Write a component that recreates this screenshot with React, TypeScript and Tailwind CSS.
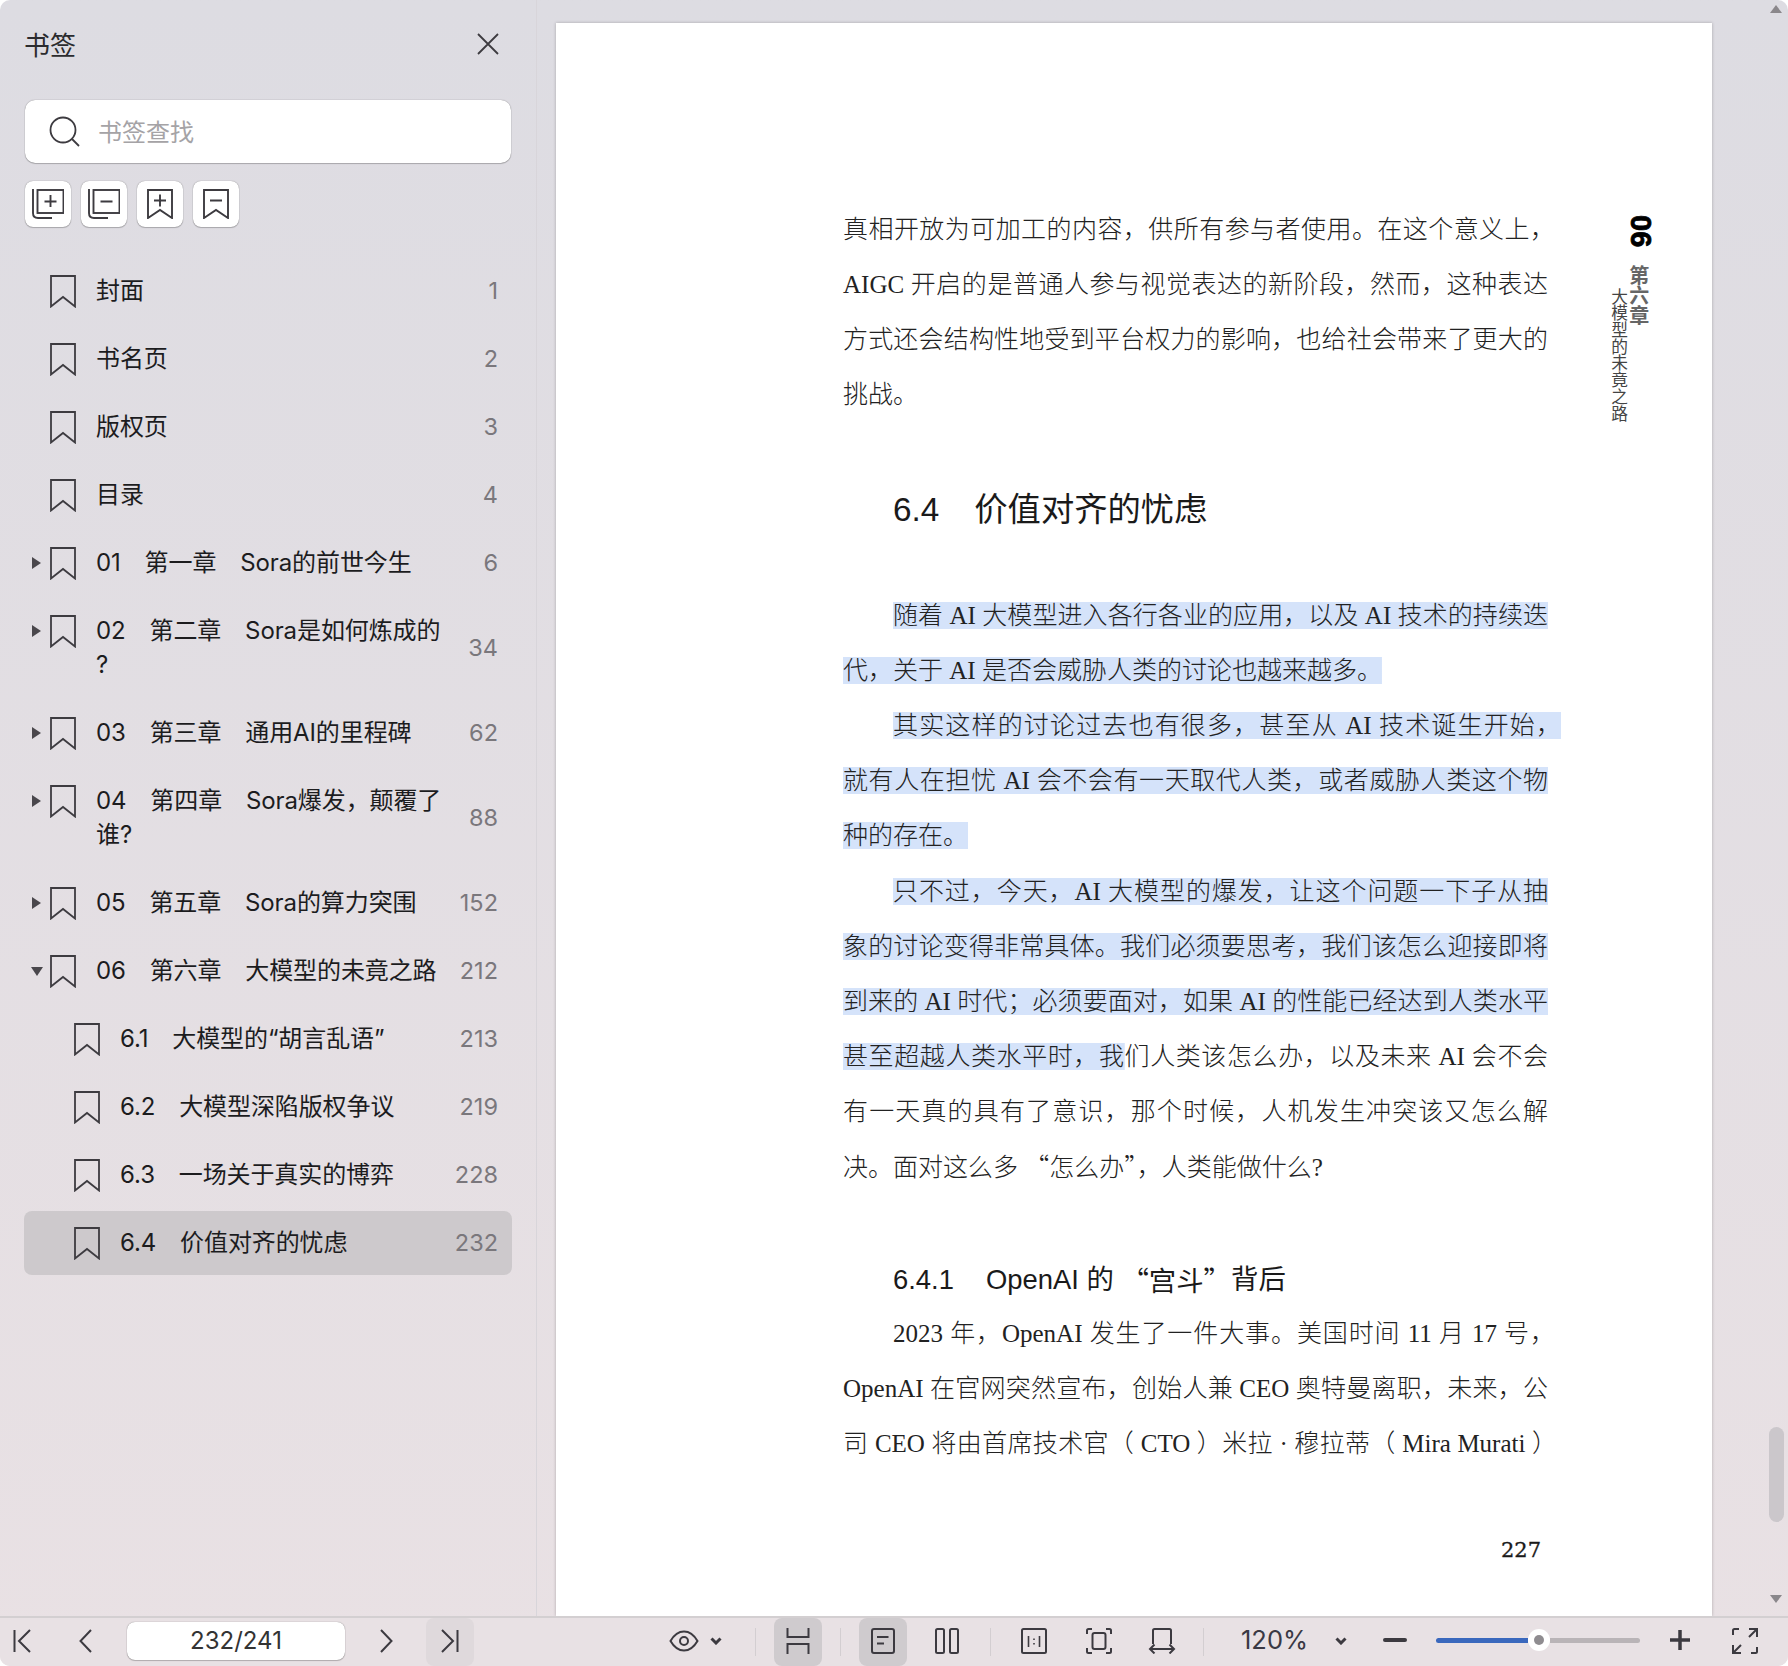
import type { ReactNode } from "react";

const sans = "font-['Inter','Noto_Sans_CJK_SC',sans-serif]";
const hl =
  "bg-[linear-gradient(#d5e3fa,#d5e3fa)] bg-no-repeat bg-center bg-[length:100%_27px]";
const raised = "bg-white shadow-[0_0_1px_rgba(0,0,0,0.5),0_1px_1px_rgba(0,0,0,0.2)]";

interface Bm {
  label: string;
  page: number;
  arrow?: "right" | "down";
  nested?: boolean;
  active?: boolean;
}

const bookmarks: Bm[] = [
  { label: "封面", page: 1 },
  { label: "书名页", page: 2 },
  { label: "版权页", page: 3 },
  { label: "目录", page: 4 },
  { label: "01\u3000第一章\u3000Sora的前世今生", page: 6, arrow: "right" },
  { label: "02\u3000第二章\u3000Sora是如何炼成的 ?", page: 34, arrow: "right" },
  { label: "03\u3000第三章\u3000通用AI的里程碑", page: 62, arrow: "right" },
  { label: "04\u3000第四章\u3000Sora爆发，颠覆了谁?", page: 88, arrow: "right" },
  { label: "05\u3000第五章\u3000Sora的算力突围", page: 152, arrow: "right" },
  { label: "06\u3000第六章\u3000大模型的未竟之路", page: 212, arrow: "down" },
  { label: "6.1\u3000大模型的“胡言乱语”", page: 213, nested: true },
  { label: "6.2\u3000大模型深陷版权争议", page: 219, nested: true },
  { label: "6.3\u3000一场关于真实的博弈", page: 228, nested: true },
  { label: "6.4\u3000价值对齐的忧虑", page: 232, nested: true, active: true },
];

function BookmarkIcon() {
  return (
    <svg width="26" height="33" viewBox="0 0 26 33" fill="none" stroke="#3d3b40" strokeWidth="1.8" className="shrink-0">
      <path d="M1 1H25V31.5L13 22L1 31.5Z" />
    </svg>
  );
}

function Row({ b }: { b: Bm }) {
  return (
    <div className="py-[2px]">
      <div className={`flex items-center rounded-[8px] py-[15px] pr-[14px] ${b.active ? "bg-[#cdc9cc]" : ""}`}>
        <div className={`flex flex-1 items-start ${b.nested ? "pl-[50px]" : "pl-[26px]"}`}>
          <div className="flex h-[34px] w-[7px] shrink-0 items-center">
            {b.arrow === "right" && (
              <svg width="9" height="12" viewBox="0 0 9 12" className="-ml-[18px] shrink-0" fill="#4a474c">
                <path d="M0 0L9 6L0 12Z" />
              </svg>
            )}
            {b.arrow === "down" && (
              <svg width="12" height="9" viewBox="0 0 12 9" className="-ml-[19px] shrink-0" fill="#4a474c">
                <path d="M0 0H12L6 9Z" />
              </svg>
            )}
          </div>
          <div className="-ml-[7px] flex h-[34px] items-center">
            <BookmarkIcon />
          </div>
          <div className={`ml-[20px] text-[24px] leading-[34px] tracking-[-0.1px] text-[#1c1c1e] ${b.nested ? "w-[326px]" : "w-[350px]"}`}>
            {b.label}
          </div>
        </div>
        <div className="text-[23.5px] leading-[34px] text-[#7a777c]">{b.page}</div>
      </div>
    </div>
  );
}

function SmallBtn({ children }: { children: ReactNode }) {
  return (
    <div className={`flex h-[46px] w-[46px] items-center justify-center rounded-[8px] ${raised}`}>
      {children}
    </div>
  );
}

function Sidebar() {
  const s = { fill: "none", stroke: "#3d3b40", strokeWidth: 1.9 };
  return (
    <div className="h-full w-[537px] shrink-0 border-r border-[#d8d5da] pl-[24px] pr-[24px]">
      <div className="flex h-[88px] items-center justify-between pr-[13px]">
        <div className="pt-[2px] text-[26px] text-[#2b2b2e]">书签</div>
        <svg width="22" height="22" viewBox="0 0 22 22" fill="none" stroke="#3d3b40" strokeWidth="1.8">
          <path d="M1 1L21 21M21 1L1 21" />
        </svg>
      </div>
      <div className={`ml-[1px] mt-[12px] flex h-[63px] w-[486px] items-center rounded-[10px] pl-[24px] ${raised}`}>
        <svg width="31" height="31" viewBox="0 0 31 31" fill="none" stroke="#3d3b40" strokeWidth="1.8">
          <circle cx="14" cy="14" r="12.5" />
          <path d="M23 23L30 30" />
        </svg>
        <div className="ml-[18px] pt-[2px] text-[24px] text-[#a5a3a6]">书签查找</div>
      </div>
      <div className="ml-[1px] mt-[18px] flex gap-[10px]">
        <SmallBtn>
          <svg width="32" height="30" viewBox="0 0 32 30" {...s}>
            <rect x="5.5" y="1" width="26" height="23" />
            <path d="M1 0V24Q1 29 6 29H20M18.5 6V18M12.5 12.5H24.5" />
          </svg>
        </SmallBtn>
        <SmallBtn>
          <svg width="32" height="30" viewBox="0 0 32 30" {...s}>
            <rect x="5.5" y="1" width="26" height="23" />
            <path d="M1 0V24Q1 29 6 29H20M12.5 12.5H24.5" />
          </svg>
        </SmallBtn>
        <SmallBtn>
          <svg width="26" height="30" viewBox="0 0 26 30" className="-ml-[1px]" {...s}>
            <path d="M1 1H25V29L13 21L1 29ZM13 5.5V17.5M7 11.5H19" />
          </svg>
        </SmallBtn>
        <SmallBtn>
          <svg width="26" height="30" viewBox="0 0 26 30" className="-ml-[1px]" {...s}>
            <path d="M1 1H25V29L13 21L1 29ZM7 11.5H19" />
          </svg>
        </SmallBtn>
      </div>
      <div className="mt-[30px]">
        {bookmarks.map((b) => (
          <Row key={b.label} b={b} />
        ))}
      </div>
    </div>
  );
}

function Line({
  children,
  indent,
  w = 705,
  plain,
}: {
  children: ReactNode;
  indent?: boolean;
  w?: number;
  plain?: boolean;
}) {
  return (
    <div className={`flex h-[55.2px] items-center ${indent ? "ml-[50px]" : ""}`}>
      <div
        style={{ width: plain ? undefined : w - (indent ? 50 : 0) }}
        className={`shrink-0 ${plain ? "" : "[text-align:justify] [text-align-last:justify]"}`}
      >
        {children}
      </div>
    </div>
  );
}

function Q({ children }: { children: ReactNode }) {
  return <span className="font-['Noto_Sans_CJK_SC',sans-serif]">{children}</span>;
}

function Page() {
  const h = "font-['Liberation_Sans','Noto_Sans_CJK_SC',sans-serif] font-normal text-[#1a1a1a]";
  return (
    <div className="ml-[19px] mt-[23px] flex h-[1593px] w-[1156px] shrink-0 overflow-hidden bg-white shadow-[0_0_3px_rgba(0,0,0,0.25)]">
      <div className="ml-[287px] w-[705px] shrink-0 pt-[179px] font-['Liberation_Serif','Noto_Sans_CJK_SC',serif] text-[25px] font-light text-[#222]">
        <Line w={712}>真相开放为可加工的内容，供所有参与者使用。在这个意义上，</Line>
        <Line>AIGC 开启的是普通人参与视觉表达的新阶段，然而，这种表达</Line>
        <Line>方式还会结构性地受到平台权力的影响，也给社会带来了更大的</Line>
        <Line plain>挑战。</Line>

        <div className={`ml-[50px] mt-[62px] flex h-[50px] items-center text-[33.3px] ${h}`}>
          <span className="mr-[35px]">6.4</span>价值对齐的忧虑
        </div>

        <div className="mt-[53px]">
          <Line indent><span className={hl}>随着 AI 大模型进入各行各业的应用，以及 AI 技术的持续迭</span></Line>
          <Line plain><span className={hl}>代，关于 AI 是否会威胁人类的讨论也越来越多。</span></Line>
          <Line indent w={718}><span className={hl}>其实这样的讨论过去也有很多，甚至从 AI 技术诞生开始，</span></Line>
          <Line><span className={hl}>就有人在担忧 AI 会不会有一天取代人类，或者威胁人类这个物</span></Line>
          <Line plain><span className={hl}>种的存在。</span></Line>
          <Line indent><span className={hl}>只不过，今天，AI 大模型的爆发，让这个问题一下子从抽</span></Line>
          <Line><span className={hl}>象的讨论变得非常具体。我们必须要思考，我们该怎么迎接即将</span></Line>
          <Line><span className={hl}>到来的 AI 时代；必须要面对，如果 AI 的性能已经达到人类水平</span></Line>
          <Line><span className={hl}>甚至超越人类水平时，我</span>们人类该怎么办，以及未来 AI 会不会</Line>
          <Line>有一天真的具有了意识，那个时候，人机发生冲突该又怎么解</Line>
          <Line plain>决。面对这么多 <Q>“怎么办”</Q>，人类能做什么?</Line>
        </div>

        <div className={`ml-[50px] mt-[65px] flex h-[40px] items-center whitespace-pre text-[27.4px] ${h}`}>
          <span className="mr-[32px]">6.4.1</span>OpenAI 的 <Q>“宫斗”</Q>背后
        </div>

        <div className="mt-[6px]">
          <Line indent w={712}>2023 年，OpenAI 发生了一件大事。美国时间 11 月 17 号，</Line>
          <Line>OpenAI 在官网突然宣布，创始人兼 CEO 奥特曼离职，未来，公</Line>
          <Line w={714}>司 CEO 将由首席技术官（ CTO ）米拉 · 穆拉蒂（ Mira Murati ）</Line>
        </div>

        <div className="mt-[64px] h-[30px] pr-[7px] text-right font-['DejaVu_Serif',serif] text-[21px] font-normal leading-[30px] text-[#1a1a1a] [-webkit-text-stroke:0.3px_#1a1a1a]">
          227
        </div>
      </div>

      <div className="ml-[63px] flex items-start pt-[192px]">
        <div className="mt-[73px] text-[16.7px] leading-[16.7px] text-[#444] [writing-mode:vertical-rl] font-['Noto_Sans_CJK_SC',sans-serif]">
          大模型的未竟之路
        </div>
        <div className="ml-[1px] flex flex-col items-center">
          <div className="font-['Liberation_Sans',sans-serif] text-[29px] font-bold leading-[20px] text-black [-webkit-text-stroke:0.8px_black] [writing-mode:vertical-rl]">
            06
          </div>
          <div className="mr-[4px] mt-[18px] font-['Noto_Sans_CJK_SC',sans-serif] text-[20px] font-bold leading-[20px] text-[#666] [writing-mode:vertical-rl]">
            第六章
          </div>
        </div>
      </div>
    </div>
  );
}

function Scrollbar() {
  return (
    <div className="ml-[54px] flex w-[20px] shrink-0 flex-col items-center">
      <svg width="12" height="8" viewBox="0 0 12 8" className="mt-[5px]" fill="#8a878b">
        <path d="M6 0L12 8H0Z" />
      </svg>
      <div className="mt-[1414px] h-[95px] w-[15px] rounded-full bg-[#cbc7cb]" />
      <svg width="12" height="8" viewBox="0 0 12 8" className="mt-[73px]" fill="#8a878b">
        <path d="M0 0H12L6 8Z" />
      </svg>
    </div>
  );
}

function Cell({ children, active, ml }: { children: ReactNode; active?: string; ml?: string }) {
  return (
    <div className={`flex h-full w-[48px] shrink-0 items-center justify-center rounded-[8px] pb-[2px] ${active ?? ""} ${ml ?? ""}`}>
      {children}
    </div>
  );
}

function Sep({ ml }: { ml: string }) {
  return <div className={`h-[28px] w-[1px] shrink-0 bg-[#d3ced1] ${ml}`} />;
}

function Toolbar() {
  const s = { fill: "none", stroke: "#3c3a40", strokeWidth: 2 };
  const small = (
    <svg width="12" height="8" viewBox="0 0 12 8" fill="none" stroke="#3c3a40" strokeWidth="3">
      <path d="M1.5 1.5L6 6L10.5 1.5" />
    </svg>
  );
  return (
    <div className="flex h-[50px] shrink-0 items-center border-t-2 border-[#d3cfd1] bg-[#e8e1e4]">
      <div className="flex h-full w-[44px] shrink-0 items-center justify-center pb-[2px] pl-[2px]">
        <svg width="24" height="24" viewBox="0 0 24 24" {...s}>
          <path d="M3.5 1V23M19 1L8 12L19 23" />
        </svg>
      </div>
      <Cell ml="ml-[17px]">
        <svg width="13" height="24" viewBox="0 0 13 24" {...s}>
          <path d="M12 1L1.5 12L12 23" />
        </svg>
      </Cell>
      <div className={`mb-[2px] ml-[18px] flex h-[38px] w-[218px] shrink-0 items-center justify-center rounded-[8px] text-[24px] text-[#333] ${raised}`}>
        232/241
      </div>
      <Cell ml="ml-[18px]">
        <svg width="13" height="24" viewBox="0 0 13 24" className="-ml-[2px]" {...s}>
          <path d="M1 1L11.5 12L1 23" />
        </svg>
      </Cell>
      <Cell ml="ml-[15px]" active="bg-[#dfd9dc]">
        <svg width="24" height="24" viewBox="0 0 24 24" className="-ml-[2px]" {...s}>
          <path d="M20.5 1V23M5 1L16 12L5 23" />
        </svg>
      </Cell>
      <Cell ml="ml-[186px]">
        <svg width="30" height="22" viewBox="0 0 30 22" {...s}>
          <path d="M1.5 11C5 5 10 1.5 15 1.5S25 5 28.5 11C25 17 20 20.5 15 20.5S5 17 1.5 11Z" />
          <circle cx="15" cy="11" r="4" />
        </svg>
      </Cell>
      <div className="flex w-[16px] shrink-0 justify-center pb-[2px]">{small}</div>
      <Sep ml="ml-[31px]" />
      <Cell ml="ml-[18px]" active="bg-[#cfcbce]">
        <svg width="24" height="26" viewBox="0 0 24 26" {...s}>
          <path d="M1.5 0V9H22.5V0M1.5 26V16H22.5V26" />
        </svg>
      </Cell>
      <Sep ml="ml-[18px]" />
      <Cell ml="ml-[18px]" active="bg-[#cfcbce]">
        <svg width="24" height="26" viewBox="0 0 24 26" {...s}>
          <rect x="1" y="1" width="22" height="24" rx="2" />
          <path d="M6 9H17.5M6 15.5H13" />
        </svg>
      </Cell>
      <Cell ml="ml-[16px]">
        <svg width="24" height="26" viewBox="0 0 24 26" {...s}>
          <rect x="1" y="1" width="8" height="24" rx="1.5" />
          <rect x="15" y="1" width="8" height="24" rx="1.5" />
        </svg>
      </Cell>
      <Sep ml="ml-[19px]" />
      <Cell ml="ml-[19px]">
        <svg width="26" height="26" viewBox="0 0 26 26" {...s}>
          <rect x="1" y="1" width="24" height="24" rx="1.5" />
          <path d="M7.5 8V19M18.5 8V19M13 10.5V12M13 15V16.5" strokeWidth="1.6" />
        </svg>
      </Cell>
      <Cell ml="ml-[17px]">
        <svg width="26" height="26" viewBox="0 0 26 26" {...s}>
          <path d="M1 6V2.5Q1 1 2.5 1H6M20 1H23.5Q25 1 25 2.5V6M25 20V23.5Q25 25 23.5 25H20M6 25H2.5Q1 25 1 23.5V20" />
          <rect x="6.5" y="5" width="13" height="16" rx="2" />
        </svg>
      </Cell>
      <Cell ml="ml-[15px]">
        <svg width="28" height="26" viewBox="0 0 28 26" {...s}>
          <path d="M5 16V2.5Q5 1 6.5 1H21.5Q23 1 23 2.5V16M2 21H26M6.5 16.5L2 21L6.5 25.5M21.5 16.5L26 21L21.5 25.5" />
        </svg>
      </Cell>
      <Sep ml="ml-[17px]" />
      <div className="mb-[3px] ml-[37px] w-[66px] shrink-0 whitespace-nowrap text-[25.5px] text-[#3a3944]">120%</div>
      <div className="ml-[26px] flex w-[16px] shrink-0 justify-center pb-[2px]">{small}</div>
      <div className="mb-[4px] ml-[34px] h-[4px] w-[24px] shrink-0 rounded-full bg-[#3c3a40]" />
      <div className="mb-[4px] ml-[29px] flex h-[22px] w-[204px] shrink-0 items-center">
        <div className="h-[5px] w-[92px] rounded-l-full bg-[#3a68bd]" />
        <div className="flex h-[22px] w-[22px] shrink-0 items-center justify-center rounded-full bg-white">
          <div className="h-[10px] w-[10px] rounded-full bg-[#8f8c90]" />
        </div>
        <div className="h-[5px] flex-1 rounded-r-full bg-[#b9b4b7]" />
      </div>
      <div className="mb-[4px] ml-[28px] shrink-0">
        <svg width="24" height="24" viewBox="0 0 24 24" fill="none" stroke="#3c3a40" strokeWidth="3.5">
          <path d="M12 2V22M2 12H22" />
        </svg>
      </div>
      <div className="mb-[2px] ml-[40px] shrink-0">
        <svg width="26" height="26" viewBox="0 0 26 26" {...s}>
          <path d="M1 7V2.5Q1 1 2.5 1H7M25 19V23.5Q25 25 23.5 25H19M17 1H25V9M25 1L17 9M9 25H1V17M1 25L9 17" />
        </svg>
      </div>
    </div>
  );
}

export default function App() {
  return (
    <div lang="zh-CN" className={`h-[1666px] w-full overflow-hidden bg-white ${sans}`}>
      <div className="flex h-full flex-col overflow-hidden rounded-[10px] bg-linear-to-b from-[#dddce2] to-[#e9e1e4]">
        <div className="flex min-h-0 flex-1">
          <Sidebar />
          <Page />
          <Scrollbar />
        </div>
        <Toolbar />
      </div>
    </div>
  );
}
